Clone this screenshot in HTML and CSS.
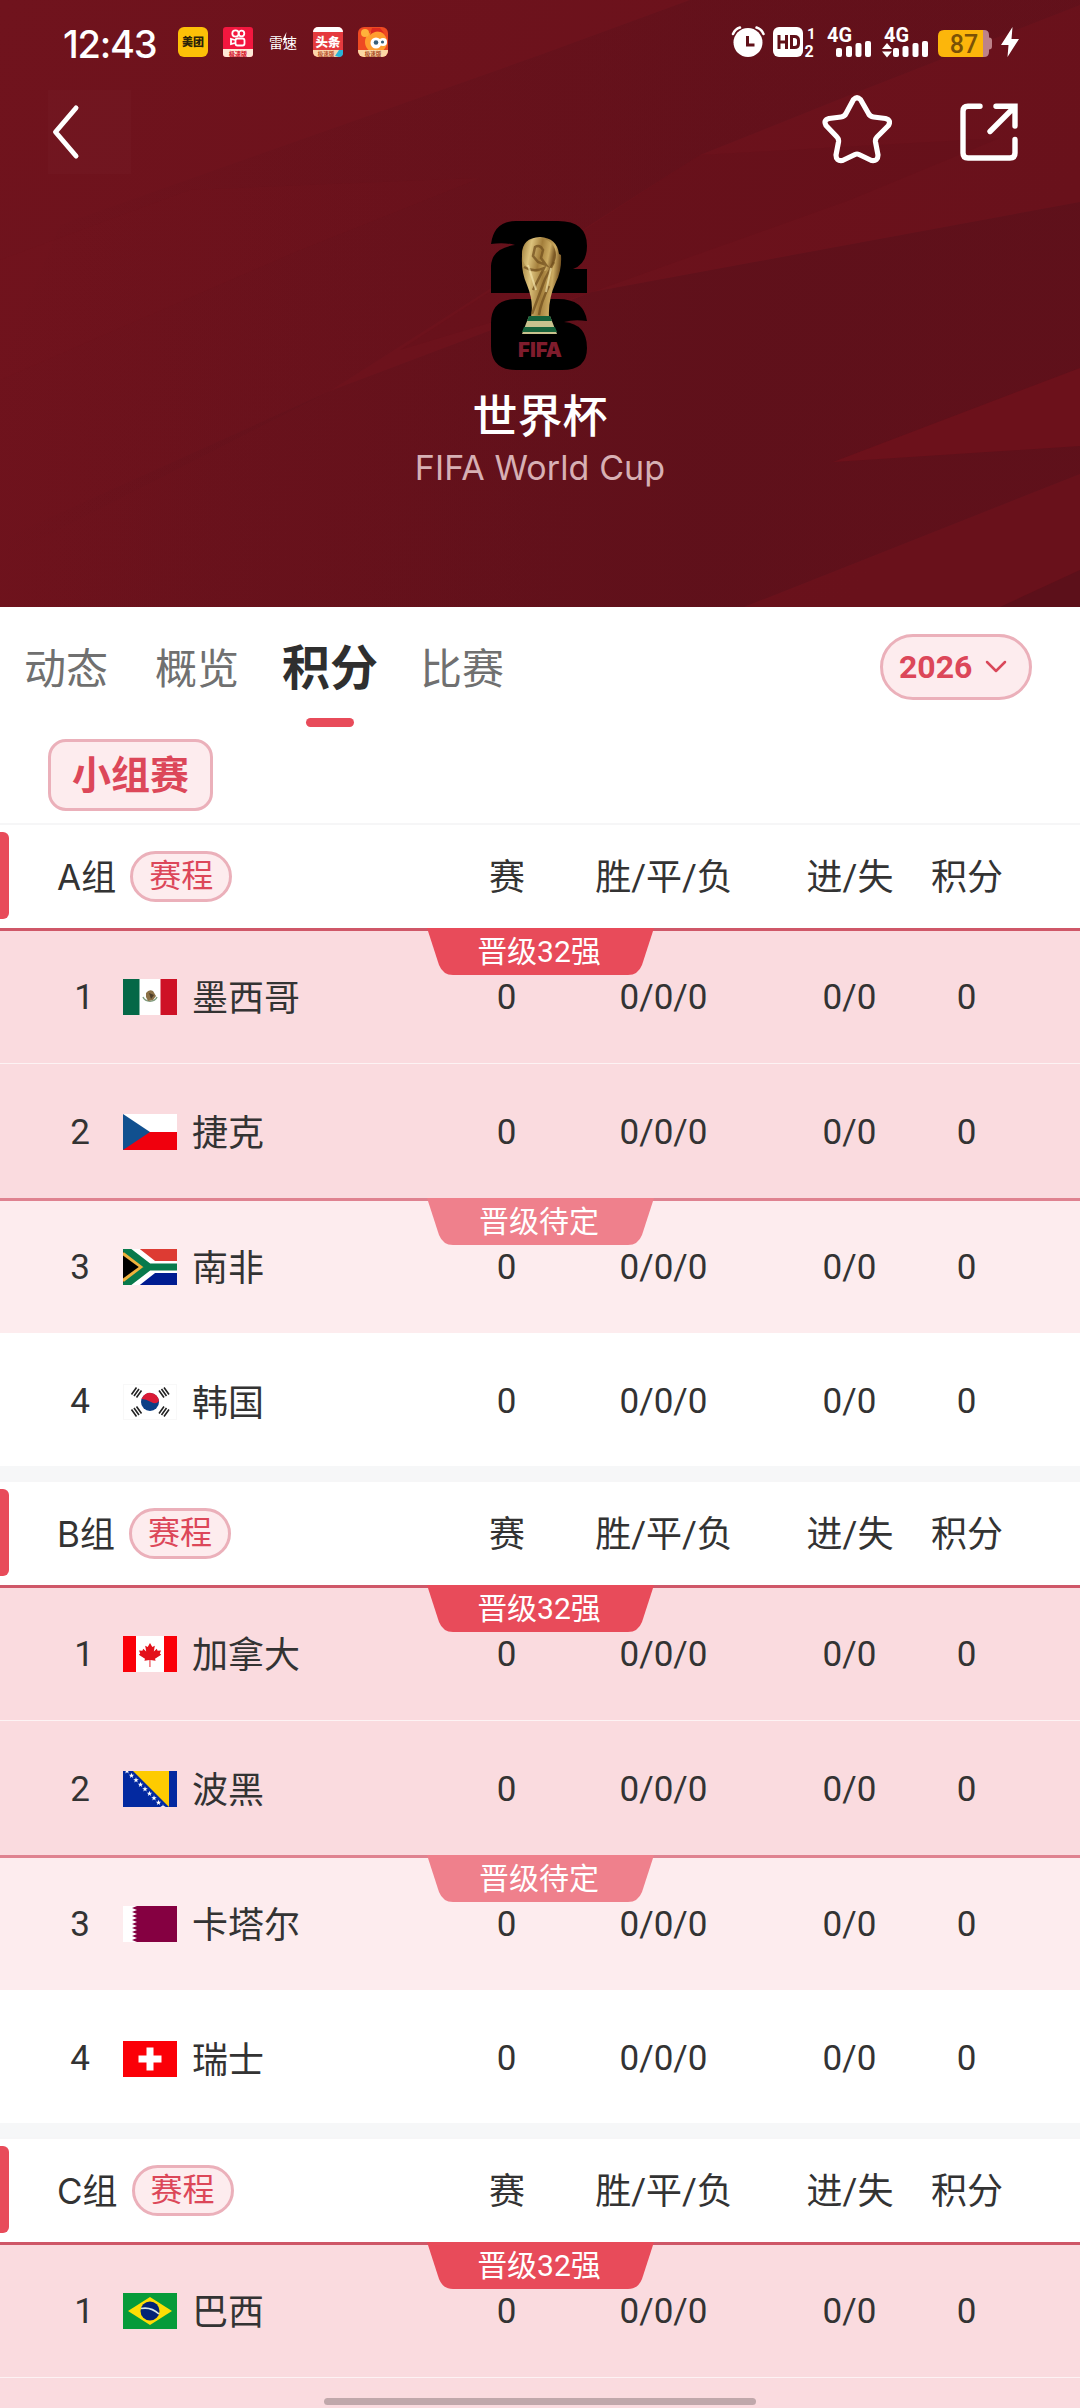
FILE: index.html
```html
<!DOCTYPE html>
<html lang="zh-CN">
<head>
	<meta charset="UTF-8">
	<title>世界杯</title>
	<link rel="stylesheet" href="styles.css">
</head>
<body>
<div class="page">
	<header class="hero">
		<svg class="hero-bg" viewBox="0 0 1080 607" preserveAspectRatio="none">
			<defs>
				<linearGradient id="bgBase" x1="0" y1="0" x2="1" y2="0.3">
					<stop offset="0" stop-color="#70131d"/>
					<stop offset="1" stop-color="#69111b"/>
				</linearGradient>
				<linearGradient id="bgDark" x1="0" y1="0" x2="1" y2="0">
					<stop offset="0" stop-color="#58101a" stop-opacity="0"/>
					<stop offset="0.65" stop-color="#58101a" stop-opacity="0.6"/>
					<stop offset="1" stop-color="#58101a" stop-opacity="0.6"/>
				</linearGradient>
			</defs>
			<rect width="1080" height="607" fill="url(#bgBase)"/>
			<polygon points="60,225 540,55 690,0 1080,0 1080,5 850,95 700,155 330,391 0,560 0,370" fill="url(#bgDark)" opacity="0.7"/>
			<polygon points="700,155 1000,138 850,200 592,292 400,350" fill="#58101a" opacity="0.2"/>
			<polygon points="0,260 190,190 480,178 300,250 0,380" fill="#7a1520" opacity="0.12"/>
			<polygon points="1080,202 592,292 330,391 0,540 0,607 744,607 1080,474" fill="url(#bgDark)"/>
			<polygon points="833,462 1080,368 1080,446" fill="#6c111b"/>
			<polygon points="1080,570 1080,607 1000,607" fill="#57101a" opacity="0.7"/>
		</svg>

		<div class="status">
			<span class="time">12:43</span>
			<div class="apps">
				<svg width="30" height="30" viewBox="0 0 30 30">
					<rect width="30" height="30" rx="6" fill="#fdc007"/>
					<text x="15" y="19" font-size="11" font-weight="900" text-anchor="middle" fill="#2b2208">美团</text>
				</svg>
				<svg width="30" height="30" viewBox="0 0 30 30">
					<rect width="30" height="30" rx="3" fill="#f3173f"/>
					<path d="M0 22H30V27a3 3 0 0 1-3 3H3a3 3 0 0 1-3-3Z" fill="#fde9d6"/>
					<g fill="none" stroke="#fff" stroke-width="1.800">
						<circle cx="12.500" cy="6.500" r="3.200"/><circle cx="18.500" cy="6.500" r="2.800"/>
						<rect x="12.500" y="11.500" width="9" height="7" rx="2"/><path d="M12 13l-4-1v5l4-1"/>
					</g>
					<text x="15" y="28.500" font-size="6" font-weight="900" text-anchor="middle" fill="#d81f35">极速版</text>
				</svg>
				<svg width="30" height="30" viewBox="0 0 30 30">
					<text x="15" y="21" font-size="14" text-anchor="middle" fill="#fff">雷速</text>
					<path d="M18.500 5l-4 8h2l-2 6 5-8h-2z" fill="#fff"/>
				</svg>
				<svg width="30" height="30" viewBox="0 0 30 30">
					<rect width="30" height="30" rx="5" fill="#e53a3e"/>
					<path d="M0 5a5 5 0 0 1 5-5H25a5 5 0 0 1 5 5Z" fill="#fff"/>
					<path d="M0 23H30V25a5 5 0 0 1-5 5H5a5 5 0 0 1-5-5Z" fill="#fbd5ac"/>
					<text x="15" y="19.500" font-size="12.500" font-weight="900" text-anchor="middle" fill="#fff">头条</text>
					<text x="13" y="28.500" font-size="5.500" font-weight="700" text-anchor="middle" fill="#b5502c">极速版</text>
					<path d="M22 29l4-6h4v3a4 4 0 0 1-4 4z" fill="#28b5d8"/>
				</svg>
				<svg width="30" height="30" viewBox="0 0 30 30">
					<rect width="30" height="30" rx="6" fill="#ee4a22"/>
					<circle cx="18" cy="15" r="11" fill="#ff9d2e"/>
					<circle cx="7" cy="6" r="4" fill="#ffb13b"/>
					<path d="M12 8q6-6 14-2l-4-5H14z" fill="#dd2a20"/>
					<circle cx="18" cy="16" r="5.500" fill="#fff"/><circle cx="25" cy="15" r="4" fill="#fff"/>
					<circle cx="18" cy="15.500" r="2.300" fill="#38607a"/><circle cx="24.500" cy="15" r="1.600" fill="#38607a"/>
					<path d="M0 23H30V24a6 6 0 0 1-6 6H6a6 6 0 0 1-6-6Z" fill="#fcd7a5"/>
					<text x="15" y="28.500" font-size="5.500" font-weight="700" text-anchor="middle" fill="#a84a24">极速版</text>
				</svg>
			</div>
			<svg class="signals" width="292" height="44" viewBox="731 20 292 44">
				<!-- alarm -->
				<circle cx="749" cy="42.500" r="14.500" fill="#fff"/>
				<path d="M734 34q2-5 7-6.500M764.500 34q-2-5-7-6.500" fill="none" stroke="#fff" stroke-width="2.500" stroke-linecap="round"/>
				<path d="M748.500 36v9h7" fill="none" stroke="#5f1018" stroke-width="3"/>
				<!-- HD -->
				<rect x="774" y="27" width="30" height="30" rx="6" fill="#fff"/>
				<path d="M780 35v14M787.500 35v14M780 42h7.500M792.500 36.500h3q4 0 4 4v3q0 4-4 4h-3z" fill="none" stroke="#5f1018" stroke-width="3"/>
				<text class="sb" x="808" y="38.500" font-size="15">1</text>
				<text class="sb" x="805.500" y="56.500" font-size="16">2</text>
				<!-- sim 1 -->
				<text class="sb" x="828" y="42" font-size="20" textLength="25" lengthAdjust="spacingAndGlyphs">4G</text>
				<g fill="#fff">
					<rect x="837" y="48" width="6" height="9" rx="2"/><rect x="847" y="46" width="6" height="11" rx="2"/>
					<rect x="856.500" y="43" width="6" height="14" rx="2"/><rect x="866" y="41" width="6" height="16" rx="2"/>
				</g>
				<!-- sim 2 -->
				<text class="sb" x="885" y="42" font-size="20" textLength="25" lengthAdjust="spacingAndGlyphs">4G</text>
				<g fill="#fff">
					<path d="M883 49l5-6 5 6zM883 51.500l5 6 5-6z"/>
					<rect x="894" y="48" width="6" height="9" rx="2"/><rect x="903.500" y="46" width="6" height="11" rx="2"/>
					<rect x="913.500" y="43" width="6" height="14" rx="2"/><rect x="923" y="41" width="6" height="16" rx="2"/>
				</g>
				<!-- battery -->
				<path d="M984 30h1q5 0 5 5v2.500q3 0 3 3v6q0 3-3 3v2.500q0 5-5 5h-1z" fill="#bd8289"/>
				<path d="M945 30h39v27h-39q-6 0-6-6v-15q0-6 6-6z" fill="#fcb60b"/>
				<text x="965" y="52.500" font-size="25" font-weight="500" text-anchor="middle" fill="#7b5206">87</text>
				<path d="M1013.500 27l-11.500 18h7.500l-1 12 11.500-18h-7.500z" fill="#fff"/>
			</svg>
		</div>

		<div class="nav">
			<div class="back">
				<svg width="83" height="84" viewBox="0 0 83 84">
					<path d="M28 18L7.500 42L28 66" fill="none" stroke="#fff" stroke-width="5" stroke-linecap="round" stroke-linejoin="round"/>
				</svg>
			</div>
			<div class="actions">
				<svg width="70" height="70" viewBox="823 94 70 70">
					<path d="M854.500 99.500q3.500-3.500 7 0l8 14q1.500 3 5 3.500l12 1.500q6 1.500 3 7l-11.500 11.500q-2 2-1.500 5l2.500 13q0 6.500-6.500 5.500l-12.500-6q-2-1-4 0l-12.500 6q-6.500 1-6.500-5.500l2.500-13q.5-3-1.500-5l-11-11.500q-3-5.500 3-7l12-1.500q3.500-.5 5-3.500z" fill="none" stroke="#fff" stroke-width="5.200" stroke-linejoin="round"/>
				</svg>
				<svg width="60" height="60" viewBox="960 101 60 60">
					<path d="M981 106.300H969q-5 0-5 5V153q0 5 5 5H1011q5 0 5-5V139.500M997 106.300H1016V126M1014 108.500L991 131.500" fill="none" stroke="#fff" stroke-width="5.400" stroke-linecap="round"/>
				</svg>
			</div>
		</div>

		<div class="cup">
			<svg width="98" height="150" viewBox="0 0 98 150">
				<defs>
					<linearGradient id="gold" x1="0" y1="0" x2="1" y2="0.2">
						<stop offset="0" stop-color="#9b7a38"/>
						<stop offset="0.3" stop-color="#dcc27c"/>
						<stop offset="0.6" stop-color="#a37e3b"/>
						<stop offset="0.85" stop-color="#ccab62"/>
						<stop offset="1" stop-color="#7d5a26"/>
					</linearGradient>
				</defs>
				<path d="M1 24Q4 1 26 1H68Q97 1 97 26Q97 44 83 49H97V73H1V46Q2 28 25 25Q14 22 1 24Z" fill="#000"/>
				<path d="M26 79H68Q94 79 97 101Q84 99 74 102Q97 104 97 128Q97 150 72 150H26Q1 150 1 126V103Q1 79 26 79Z" fill="#000"/>
				<path d="M32 36Q31 18 50 17Q67 18 69 34L71 35Q72 50 66 62Q58 79 59 97H41Q44 82 37 65Q31 52 32 36Z" fill="url(#gold)"/>
				<circle cx="49" cy="35" r="17" fill="url(#gold)"/>
				<path d="M45 27q5-3 8 3l-2 8 5 7-8-3-5-6zM34 47q10 6 20 1l-11 22M64 42l-9 17-13 35M59 66q-8 16-10 29" fill="none" stroke="#73501f" stroke-width="2.500" opacity="0.75"/>
				<path d="M38 45l8 25M61 48l-5 24" stroke="#f2e2a8" stroke-width="2" opacity="0.7"/>
				<path d="M39 96H60L67 114H32Z" fill="#c9c28e"/>
				<path d="M39 96H60L62 101H37ZM34 107H65L67 112H32Z" fill="#17623b"/>
				<text x="50" y="137" class="fifa" text-anchor="middle" textLength="44" lengthAdjust="spacingAndGlyphs">FIFA</text>
			</svg>
			<h1 class="cup-name">世界杯</h1>
			<p class="cup-en">FIFA World Cup</p>
		</div>
	</header>

	<nav class="tabs">
		<span class="tab">动态</span>
		<span class="tab">概览</span>
		<span class="tab active">积分</span>
		<span class="tab">比赛</span>
		<button type="button" class="season">2026
			<svg width="22" height="14" viewBox="0 0 22 14"><path d="M2 2l9 9 9-9" fill="none" stroke="#d9485a" stroke-width="2.500" stroke-linecap="round" stroke-linejoin="round"/></svg>
		</button>
	</nav>
	<div class="stages">
		<span class="stage">小组赛</span>
	</div>

	<section class="group">
		<div class="group-head">
			<div class="group-name">A组<span class="schedule">赛程</span></div>
			<span>赛</span><span>胜/平/负</span><span>进/失</span><span>积分</span>
		</div>
		<div class="row top first">
			<div class="mark">晋级32强</div>
			<div class="team"><b class="one">1</b>
				<svg class="flag" viewBox="0 0 54 36"><rect width="54" height="36" fill="#fff"/><rect width="16.500" height="36" fill="#056847"/><rect x="37.500" width="16.500" height="36" fill="#ce1126"/><path d="M20 18a7.500 6.500 0 0 0 14 0" fill="none" stroke="#7f9c7e" stroke-width="1.500"/><path d="M23 14q3-4 7-2l3 5-3 4-5 1-2-4z" fill="#8b7046"/><path d="M26 14l5 2-3 4z" fill="#4c3b27"/></svg>
				<em>墨西哥</em></div>
			<span>0</span><span>0/0/0</span><span>0/0</span><span>0</span>
		</div>
		<div class="row top">
			<div class="team"><b>2</b>
				<svg class="flag" viewBox="0 0 54 36"><rect width="54" height="18" fill="#fff"/><rect y="18" width="54" height="18" fill="#f0000d"/><path d="M0 0L27 18L0 36Z" fill="#11508f"/></svg>
				<em>捷克</em></div>
			<span>0</span><span>0/0/0</span><span>0/0</span><span>0</span>
		</div>
		<div class="row pending">
			<div class="mark">晋级待定</div>
			<div class="team"><b>3</b>
				<svg class="flag" viewBox="0 0 54 36"><rect width="54" height="18" fill="#dd3b33"/><rect y="18" width="54" height="18" fill="#001c91"/><path d="M2-4L30 18L2 40M28 18H54" fill="none" stroke="#fff" stroke-width="12"/><path d="M0 0V36L23 18Z" fill="#000"/><path d="M0 4L19 18L0 32" fill="none" stroke="#f0b13c" stroke-width="4"/><path d="M0-2L26 18L0 38M24 18H54" fill="none" stroke="#087a4c" stroke-width="7"/></svg>
				<em>南非</em></div>
			<span>0</span><span>0/0/0</span><span>0/0</span><span>0</span>
		</div>
		<div class="row last">
			<div class="team"><b>4</b>
				<svg class="flag" viewBox="0 0 54 36"><rect width="54" height="36" fill="#fff"/><rect x=".5" y=".5" width="53" height="35" fill="none" stroke="#f8f8f8"/><circle cx="27" cy="18" r="9" fill="#0b3f86"/><path d="M18.500 15A9 9 0 0 1 36 17Q33 21 28 18T18.500 15Z" fill="#d91a36"/><g stroke="#222" stroke-width="1.600"><path d="M8.500 10.500l5-7M11 12l5-7M13.500 13.500l5-7"/><path d="M36 29.500l5-7M38.500 31l5-7M41 32.500l5-7"/><path d="M36 6.500l5 7M38.500 5l5 7M41 3.500l5 7"/><path d="M8.500 25.500l5 7M11 24l5 7M13.500 22.500l5 7"/></g></svg>
				<em>韩国</em></div>
			<span>0</span><span>0/0/0</span><span>0/0</span><span>0</span>
		</div>
	</section>

	<section class="group">
		<div class="group-head">
			<div class="group-name">B组<span class="schedule">赛程</span></div>
			<span>赛</span><span>胜/平/负</span><span>进/失</span><span>积分</span>
		</div>
		<div class="row top first">
			<div class="mark">晋级32强</div>
			<div class="team"><b class="one">1</b>
				<svg class="flag" viewBox="0 0 54 36"><rect width="54" height="36" fill="#fff"/><path d="M0 0H13V36H0zM41 0H54V36H41z" fill="#fa0008"/><path d="M27 7l2.300 4 2.500-1.200-1 5.700 3-2.700.8 2 3.400-.4-1.200 3.200 1.400 1.200-6.200 4 .6 2-5.200-.8V31h-.9v-7l-5.100.8.6-2-6.200-4 1.400-1.200-1.200-3.200 3.400.4.8-2 3 2.700-1-5.700 2.500 1.200z" fill="#e3111a"/></svg>
				<em>加拿大</em></div>
			<span>0</span><span>0/0/0</span><span>0/0</span><span>0</span>
		</div>
		<div class="row top">
			<div class="team"><b>2</b>
				<svg class="flag" viewBox="0 0 54 36">
					<defs><path id="star" d="M0-2.800L.7-.8H2.700L1.100.4L1.700 2.400L0 1.200L-1.700 2.400L-1.100.4L-2.700-.8H-.7Z" fill="#fff"/></defs>
					<rect width="54" height="36" fill="#0329a0"/><path d="M10 0H46V36Z" fill="#fecb00"/>
					<use href="#star" x="4" y="0"/><use href="#star" x="8.500" y="4.500"/><use href="#star" x="13" y="9"/><use href="#star" x="17.500" y="13.500"/><use href="#star" x="22" y="18"/><use href="#star" x="26.500" y="22.500"/><use href="#star" x="31" y="27"/><use href="#star" x="35.500" y="31.500"/><use href="#star" x="40" y="36"/>
				</svg>
				<em>波黑</em></div>
			<span>0</span><span>0/0/0</span><span>0/0</span><span>0</span>
		</div>
		<div class="row pending">
			<div class="mark">晋级待定</div>
			<div class="team"><b>3</b>
				<svg class="flag" viewBox="0 0 54 36"><rect width="54" height="36" fill="#fff"/><path d="M54 0H14L9 2l5 2-5 2 5 2-5 2 5 2-5 2 5 2-5 2 5 2-5 2 5 2-5 2 5 2-5 2 5 2-5 2 5 2H54Z" fill="#850041"/></svg>
				<em>卡塔尔</em></div>
			<span>0</span><span>0/0/0</span><span>0/0</span><span>0</span>
		</div>
		<div class="row last">
			<div class="team"><b>4</b>
				<svg class="flag" viewBox="0 0 54 36"><rect width="54" height="36" fill="#fb0007"/><path d="M23.500 6.500h7v8h8v7h-8v8h-7v-8h-8v-7h8z" fill="#fff"/></svg>
				<em>瑞士</em></div>
			<span>0</span><span>0/0/0</span><span>0/0</span><span>0</span>
		</div>
	</section>

	<section class="group">
		<div class="group-head">
			<div class="group-name">C组<span class="schedule">赛程</span></div>
			<span>赛</span><span>胜/平/负</span><span>进/失</span><span>积分</span>
		</div>
		<div class="row top first">
			<div class="mark">晋级32强</div>
			<div class="team"><b class="one">1</b>
				<svg class="flag" viewBox="0 0 54 36"><rect width="54" height="36" fill="#069b3a"/><path d="M27 4L49 18L27 32L5 18Z" fill="#fede05"/><circle cx="27" cy="18" r="9.500" fill="#032375"/><path d="M18 15.500q10-2 18 5.500" fill="none" stroke="#d6e6ea" stroke-width="1.700"/></svg>
				<em>巴西</em></div>
			<span>0</span><span>0/0/0</span><span>0/0</span><span>0</span>
		</div>
		<div class="row top"></div>
	</section>

	<div class="home-bar"></div>
</div>
</body>
</html>
```

FILE: styles.css
```css
* {
	box-sizing: border-box;
}
body {
	margin: 0;
	background: #fff;
	color: #333;
	font-family: Roboto, "Noto Sans CJK SC", sans-serif;
}
svg {
	display: block;
	flex: none;
}
.page {
	position: relative;
	width: 1080px;
	height: 2408px;
	overflow: hidden;
}

/* header */
.hero {
	position: relative;
	height: 607px;
	color: #fff;
}
.hero-bg {
	position: absolute;
	top: 0;
	left: 0;
	width: 100%;
	height: 100%;
	z-index: -1;
}
.status {
	display: flex;
	align-items: center;
	height: 84px;
	padding: 0 58px 0 63px;
}
.status svg text {
	font-family: Roboto, "Noto Sans CJK SC", sans-serif;
}
.status svg .sb {
	fill: #fff;
	font-family: Roboto, sans-serif;
	font-weight: 700;
}
.time {
	width: 115px;
	padding-top: 3px;
	font: 500 38px/1 Inter, sans-serif;
	letter-spacing: -1.2px;
}
.apps {
	display: flex;
	gap: 15px;
}
.signals {
	margin-left: auto;
}
.nav {
	display: flex;
	justify-content: space-between;
	padding: 6px 61px 0 48px;
	height: 90px;
}
.back {
	width: 83px;
	height: 84px;
	background: rgba(255, 255, 255, 0.015);
}
.actions {
	display: flex;
	align-items: center;
	gap: 67px;
	height: 78px;
}
.actions svg:last-child {
	margin-top: 3px;
}
.cup {
	display: flex;
	flex-direction: column;
	align-items: center;
	padding-top: 46px;
}
.cup > svg {
	margin-right: 2px;
}
.fifa {
	font: 900 20px Inter, sans-serif;
	fill: #7f1c2c;
}
.cup-name {
	margin: 16px 0 0;
	font-size: 45px;
	line-height: 64px;
	font-weight: 500;
}
.cup-en {
	margin: -4px 0 0;
	font: 400 34px/44px Inter, sans-serif;
	letter-spacing: 0.1px;
	color: #d7b0b4;
}

/* tabs */
.tabs {
	display: flex;
	align-items: center;
	height: 123px;
	padding: 0 48px 3px 24px;
	font-size: 42px;
	line-height: 60px;
	color: #707070;
}
.tab {
	margin: 6px 47px 0 0;
}
.tab.active {
	position: relative;
	margin: 4px 42px 0 -4px;
	font-size: 48px;
	font-weight: 700;
	color: #2f2f2f;
}
.tab.active::after {
	content: "";
	position: absolute;
	left: 24px;
	bottom: -28px;
	width: 48px;
	height: 9px;
	border-radius: 5px;
	background: #e84b5a;
}
.season {
	display: flex;
	align-items: center;
	justify-content: space-between;
	width: 152px;
	height: 66px;
	margin: 0 0 0 auto;
	padding: 0 22px 0 16px;
	border: 3px solid #ebb0ba;
	border-radius: 33px;
	background: #fdecee;
	color: #dc4759;
	font: 700 32px Roboto, sans-serif;
}
.stages {
	height: 93px;
	padding: 9px 48px 0;
}
.stage {
	display: block;
	width: 165px;
	height: 72px;
	border: 3px solid #ebb0ba;
	border-radius: 18px;
	background: #fdecee;
	color: #dc4759;
	font-size: 39px;
	font-weight: 700;
	line-height: 69px;
	text-align: center;
}

/* standings */
.group {
	margin-bottom: 14px;
	box-shadow: 0 14px #f6f7f8;
}
.group-head,
.row {
	display: grid;
	grid-template-columns: 476px 62px 252px 120px 114px;
	align-items: center;
	text-align: center;
	white-space: nowrap;
	font-size: 36px;
}
.group-head > span {
	justify-self: center;
	margin: -5px -20px 0;
}
.group-head {
	position: relative;
	height: 105px;
	border-top: 2px solid #f6f6f7;
	background: #fff;
}
.group-head::before {
	content: "";
	position: absolute;
	left: 0;
	top: 7px;
	width: 9px;
	height: 87px;
	border-radius: 0 6px 6px 0;
	background: #e84b5a;
}
.group-name {
	display: flex;
	align-items: center;
	padding-left: 57px;
	margin-top: -5px;
	font-family: Inter, "Noto Sans CJK SC", sans-serif;
	font-size: 35px;
}
.schedule {
	width: 102px;
	height: 51px;
	margin: 4px 0 0 14px;
	border: 3px solid #ebb0ba;
	border-radius: 26px;
	background: #fdecee;
	color: #dc4759;
	font-size: 32px;
	line-height: 43px;
}
.row {
	position: relative;
	height: 135px;
	border-top: 1px solid #fdf3f4;
	padding-top: 2px;
}
.row.top {
	background: #fadbdf;
}
.row.first,
.row.pending {
	border-top: 3px solid #cf5768;
	padding-top: 0;
}
.row.pending {
	border-color: #df8290;
	background: #fdecee;
}
.row.last {
	height: 133px;
	border-top: 0;
	padding-top: 4px;
}
.row > span {
	margin-left: -1px;
	font-size: 35px;
}
.team {
	display: flex;
	align-items: center;
}
.team b {
	width: 90px;
	font-size: 35px;
	font-weight: 400;
	text-align: right;
}
.team .one {
	text-indent: 4px;
	direction: ltr;
	padding-left: 4px;
	margin-right: -4px;
	width: 94px;
}
.team em {
	margin-top: -4px;
	font-style: normal;
}
.flag {
	width: 54px;
	height: 36px;
	margin: 0 15px 0 33px;
}
/* label hanging from the promotion line */
.mark {
	position: absolute;
	left: 427px;
	top: -3px;
	width: 227px;
	height: 47px;
	background: #e84b5a;
	clip-path: path("M0 0H227L215 37Q211 47 201 47H26Q16 47 12 37Z");
	color: #fff;
	font-size: 30px;
	line-height: 47px;
	text-indent: -3px;
}
.pending .mark {
	background: #ef808c;
}
.home-bar {
	position: absolute;
	left: 324px;
	bottom: 3px;
	width: 432px;
	height: 7px;
	border-radius: 4px;
	background: #c0a8ab;
}
```
